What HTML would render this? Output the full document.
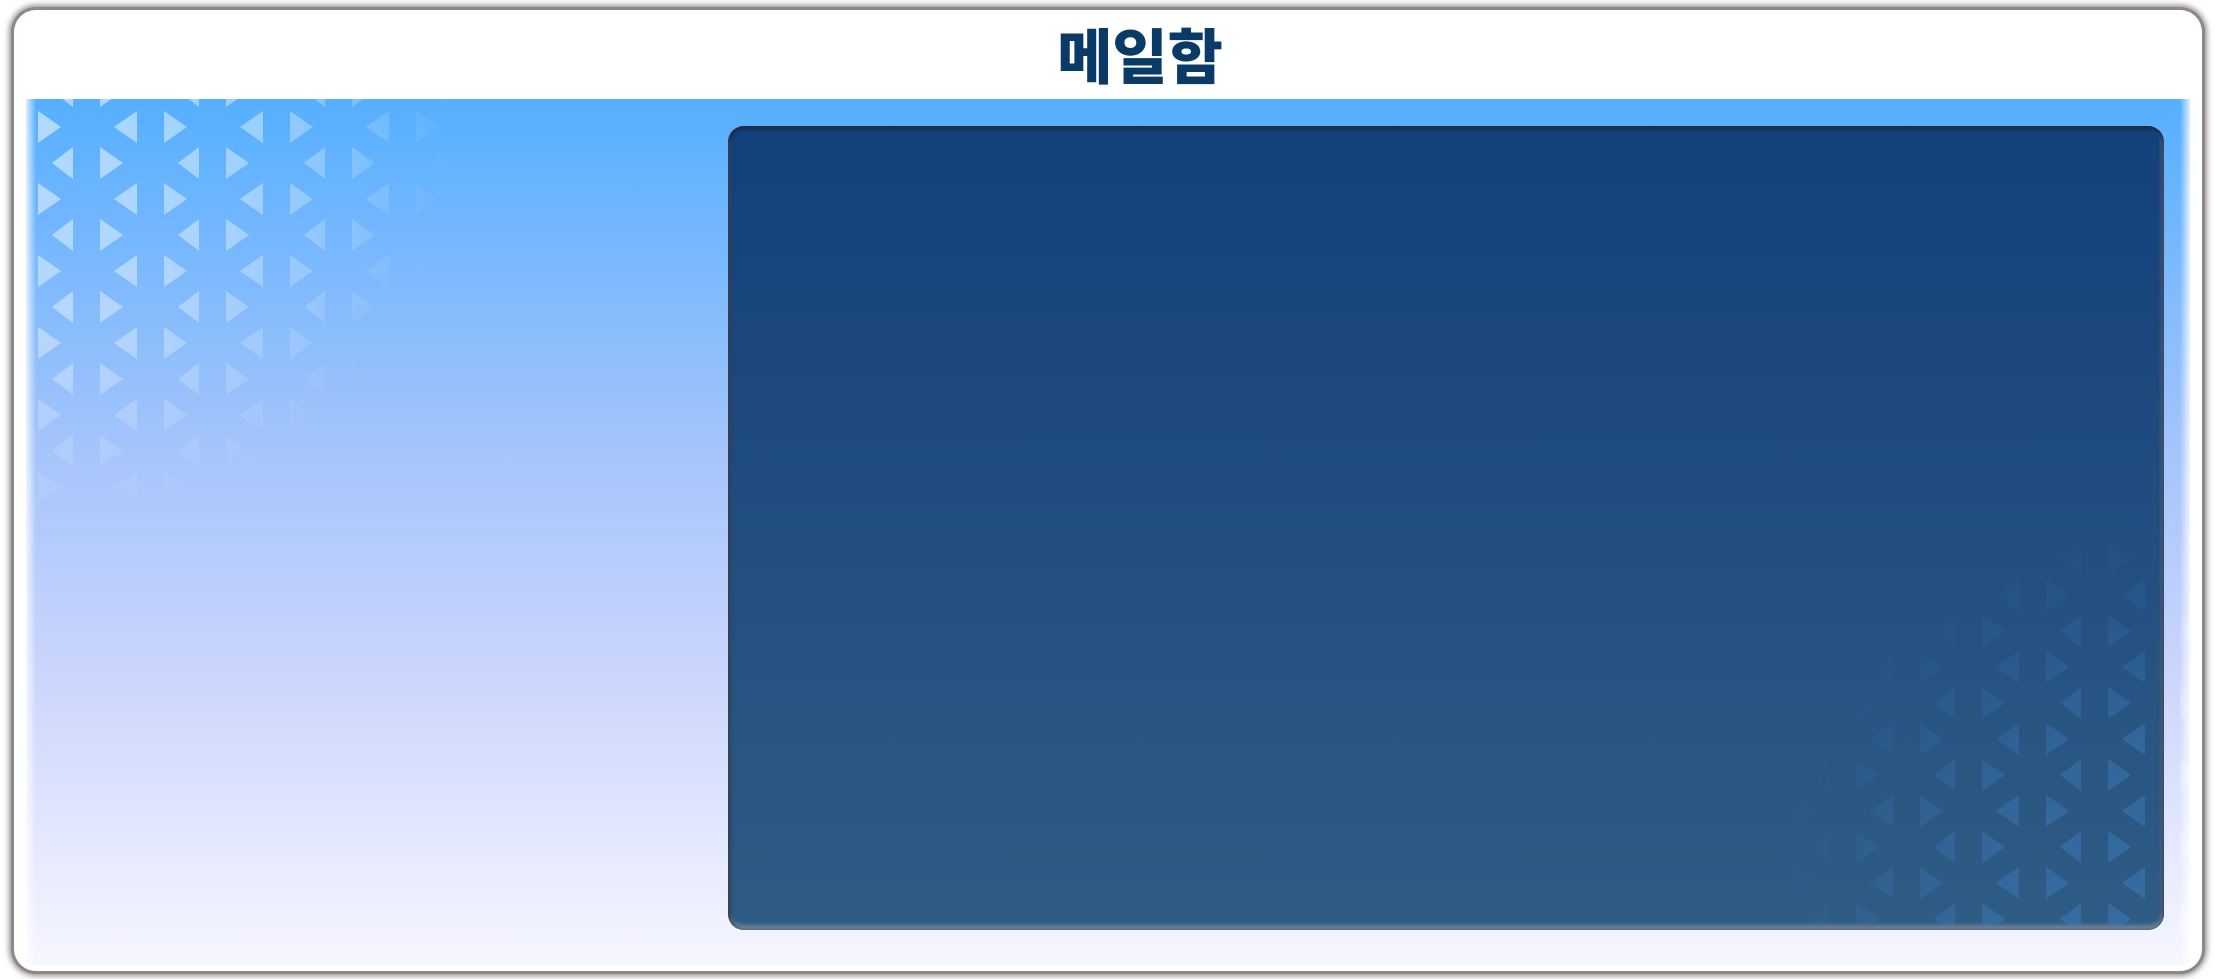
<!DOCTYPE html>
<html><head><meta charset="utf-8"><style>
html,body{margin:0;padding:0;width:2216px;height:979px;overflow:hidden;background:#fff;}
.frame{position:absolute;left:14px;top:10px;width:2188px;height:961px;border-radius:22px;background:#fff;box-shadow:0 0 0 3px #8f8686,0 0 6px 5px #9a9292;}
.title{position:absolute;left:32px;width:2216px;top:14px;text-align:center;font-family:"Noto Sans CJK KR","NanumGothic",sans-serif;font-weight:900;font-size:60px;color:#0a3a66;line-height:80px;}
.blue{position:absolute;left:26px;top:99px;width:2164px;height:866px;background:linear-gradient(#55afff 0%,#a4c4fb 40%,#c9d4fc 65%,#f6f6ff 100%);}
.blue:before{content:"";position:absolute;left:0;top:0;bottom:0;width:10px;background:linear-gradient(90deg,rgba(255,255,255,.8),rgba(255,255,255,0));}
.blue:after{content:"";position:absolute;right:0;top:0;bottom:0;width:10px;background:linear-gradient(270deg,rgba(255,255,255,.8),rgba(255,255,255,0));}
.panel{position:absolute;left:728px;top:126px;width:1436px;height:804px;border-radius:16px;background:linear-gradient(#14407c,#2f5c84);box-shadow:inset 0 3px 3px #1c2a44,inset 3px 0 4px rgba(40,50,70,.6),inset -3px 0 4px rgba(80,90,110,.6),inset 0 -4px 5px #8a96a6;overflow:hidden;}
svg{position:absolute;left:0;top:0;}
</style></head><body>
<div class="frame"></div>
<div class="title">메일함</div>
<div class="blue"></div>
<svg width="2216" height="979">
<defs>
<pattern id="tri" patternUnits="userSpaceOnUse" x="38" y="91" width="126" height="72">
<g fill="#ffffff" fill-opacity=".55">
<polygon points="0,20 0,52 23,36"/>
<polygon points="99,20 99,52 76,36"/>
<polygon points="35,-16 35,16 14,0"/><polygon points="62,-16 62,16 85,0"/>
<polygon points="35,56 35,88 14,72"/><polygon points="62,56 62,88 85,72"/>
</g>
</pattern>
<radialGradient id="gl" gradientUnits="userSpaceOnUse" cx="30" cy="99" r="430">
<stop offset="0" stop-color="#fff" stop-opacity="1"/><stop offset=".55" stop-color="#fff" stop-opacity=".7"/><stop offset="1" stop-color="#fff" stop-opacity="0"/></radialGradient>
<mask id="ml"><rect x="26" y="99" width="500" height="500" fill="url(#gl)"/></mask>
<radialGradient id="gr" gradientUnits="userSpaceOnUse" cx="2190" cy="950" r="420">
<stop offset="0" stop-color="#fff" stop-opacity="1"/><stop offset=".55" stop-color="#fff" stop-opacity=".6"/><stop offset="1" stop-color="#fff" stop-opacity="0"/></radialGradient>
<mask id="mr"><rect x="1700" y="500" width="516" height="479" fill="url(#gr)"/></mask>
</defs>
<rect x="26" y="99" width="500" height="500" fill="url(#tri)" mask="url(#ml)"/>
<rect x="2163" y="500" width="27" height="465" fill="url(#tri)" mask="url(#mr)" opacity=".6"/>
</svg>
<div class="panel"></div>
<svg width="2216" height="979">
<defs>
<pattern id="tri2" patternUnits="userSpaceOnUse" x="30" y="55" width="126" height="72">
<g fill="#3d7bbd" fill-opacity=".55">
<polygon points="0,20 0,52 23,36"/>
<polygon points="99,20 99,52 76,36"/>
<polygon points="35,-16 35,16 14,0"/><polygon points="62,-16 62,16 85,0"/>
<polygon points="35,56 35,88 14,72"/><polygon points="62,56 62,88 85,72"/>
</g>
</pattern>
<radialGradient id="gr2" gradientUnits="userSpaceOnUse" cx="2170" cy="920" r="400">
<stop offset="0" stop-color="#fff" stop-opacity="1"/><stop offset=".45" stop-color="#fff" stop-opacity=".8"/><stop offset="1" stop-color="#fff" stop-opacity="0"/></radialGradient>
<mask id="mr2"><rect x="1700" y="500" width="463" height="425" fill="url(#gr2)"/></mask>
</defs>
<rect x="1700" y="500" width="463" height="425" fill="url(#tri2)" mask="url(#mr2)"/>
</svg>
</body></html>
